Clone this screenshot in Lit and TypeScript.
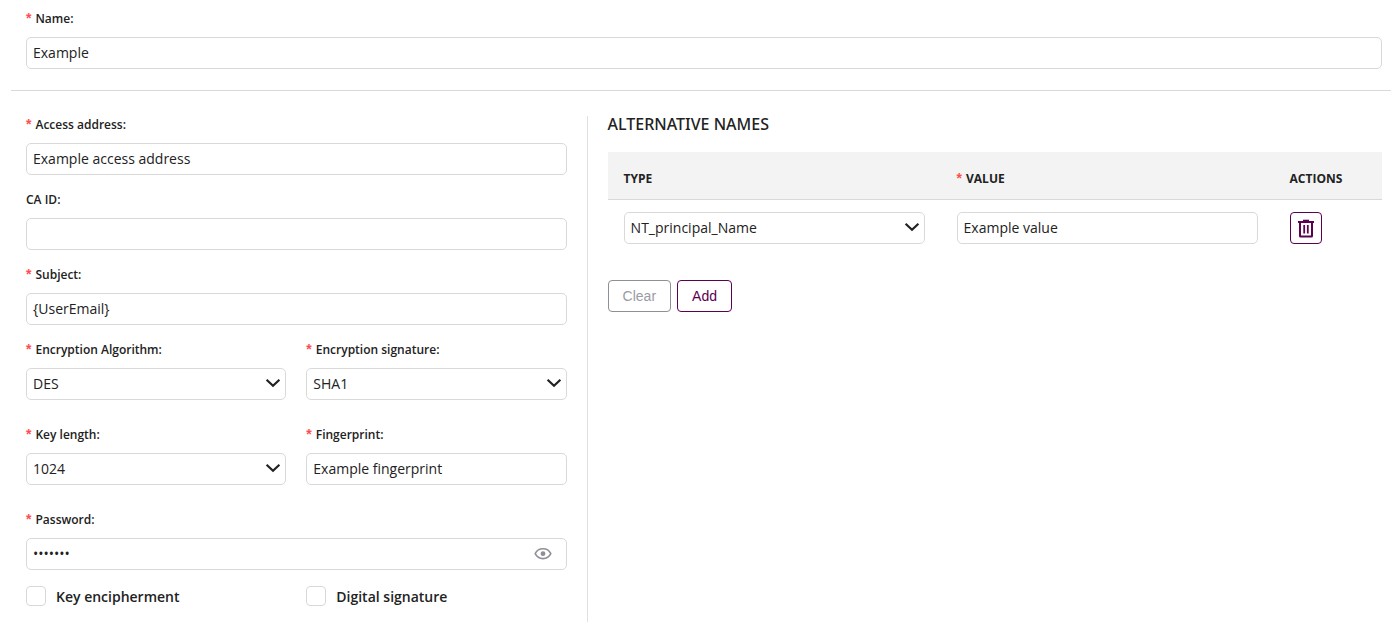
import { LitElement, html, css, svg, nothing } from "lit";
import { customElement, property, state } from "lit/decorators.js";

const controls = css`
  *,
  *::before,
  *::after {
    box-sizing: border-box;
  }
  .control {
    display: block;
    width: 100%;
    height: 32px;
    margin: 0;
    padding: 0 6px;
    border: 1px solid #d9d9d9;
    border-radius: 5px;
    background: #fff;
    color: #222;
    font: 400 14px/22px "Open Sans", "Noto Sans", sans-serif;
    appearance: none;
    outline: none;
  }
  input.control {
    padding-bottom: 2px;
  }
  .control:focus-visible {
    border-color: #5c0050;
  }
  .select-wrap,
  .password-wrap {
    display: grid;
    align-items: center;
  }
  .select-wrap > *,
  .password-wrap > * {
    grid-area: 1 / 1;
  }
  .chevron {
    justify-self: end;
    margin-right: 5px;
    pointer-events: none;
  }
  .required {
    margin-right: 4px;
    color: #ff4d4f;
    font: 700 14px/1 "Liberation Sans", Arial, sans-serif;
  }
`;

const chevron = svg`<svg class="chevron" width="16" height="16" viewBox="0 0 16 16" aria-hidden="true">
  <path d="M1.6 3.7 8 9.8 14.4 3.7" fill="none" stroke="#222" stroke-width="2.2" />
</svg>`;

@customElement("form-field")
class FormField extends LitElement {
  @property() label = "";
  @property() value = "";
  @property() kind: "text" | "select" | "password" = "text";
  @property({ type: Boolean }) required = false;
  @state() private revealed = false;

  static styles = [
    controls,
    css`
      :host {
        display: block;
        min-width: 0;
      }
      .label {
        display: block;
        height: 22px;
        margin-bottom: 7px;
        color: #222;
        font-size: 12px;
        font-weight: 600;
        line-height: 22px;
      }
      .reveal {
        display: flex;
        justify-self: end;
        margin-right: 15px;
        padding: 0;
        border: 0;
        background: none;
        cursor: pointer;
      }
    `,
  ];

  private renderControl() {
    if (this.kind === "select") {
      return html`<div class="select-wrap">
        <select id="control" class="control"><option>${this.value}</option></select>
        ${chevron}
      </div>`;
    }
    if (this.kind === "password") {
      return html`<div class="password-wrap">
        <input id="control" class="control" type=${this.revealed ? "text" : "password"} .value=${this.value} />
        <button class="reveal" type="button" aria-label="Show password" @click=${() => (this.revealed = !this.revealed)}>
          <svg width="18" height="18" viewBox="0 0 18 18" aria-hidden="true">
            <path d="M1.2 8.7C2.8 5.4 5.5 3.8 9 3.8s6.2 1.6 7.8 4.9c-1.6 3.3-4.3 4.9-7.8 4.9S2.8 12 1.2 8.7Z" fill="none" stroke="#8f8f97" stroke-width="1.6" />
            <circle cx="9" cy="8.7" r="2.4" fill="#8f8f97" />
          </svg>
        </button>
      </div>`;
    }
    return html`<input id="control" class="control" type="text" .value=${this.value} />`;
  }

  render() {
    return html`
      <label class="label" for="control">${this.required ? html`<span class="required">*</span>` : nothing}${this.label}:</label>
      ${this.renderControl()}
    `;
  }
}

@customElement("alternative-names")
class AlternativeNames extends LitElement {
  static styles = [
    controls,
    css`
      :host {
        display: block;
        min-width: 0;
      }
      .title {
        margin: 0 0 19px;
        font-family: "Noto Sans", "Open Sans", sans-serif;
        font-size: 16px;
        font-weight: 500;
        line-height: 17px;
        text-transform: uppercase;
      }
      .table {
        width: 100%;
        border-collapse: separate;
        border-spacing: 0;
        table-layout: fixed;
      }
      .wide {
        width: 43%;
      }
      .head {
        height: 48px;
        padding: 7px 16px 0;
        border-bottom: 1px solid #d9d9d9;
        background: #f3f3f3;
        font-size: 12px;
        font-weight: 700;
        line-height: 22px;
        text-align: left;
        text-transform: uppercase;
      }
      .cell {
        padding: 12px 16px;
      }
      .buttons {
        display: flex;
        gap: 6px;
        margin-top: 24px;
      }
      .button {
        height: 32px;
        padding: 0 14px;
        border: 1px solid #5c0050;
        border-radius: 4px;
        background: #fff;
        color: #5c0050;
        font: 400 14px/22px "Liberation Sans", Arial, sans-serif;
        cursor: pointer;
      }
      .muted {
        border-color: #8f8f97;
        color: #9b9ba3;
      }
      .icon {
        display: flex;
        align-items: center;
        justify-content: center;
        width: 32px;
        padding: 0;
      }
    `,
  ];

  render() {
    return html`
      <h2 class="title">Alternative names</h2>
      <table class="table">
        <thead>
          <tr>
            <th class="head wide" id="type">Type</th>
            <th class="head wide" id="value"><span class="required">*</span>Value</th>
            <th class="head">Actions</th>
          </tr>
        </thead>
        <tbody>
          <tr>
            <td class="cell">
              <div class="select-wrap">
                <select class="control" aria-labelledby="type"><option>NT_principal_Name</option></select>
                ${chevron}
              </div>
            </td>
            <td class="cell"><input class="control" type="text" aria-labelledby="value" .value=${"Example value"} /></td>
            <td class="cell">
              <button class="button icon" type="button" aria-label="Delete">
                <svg width="18" height="20" viewBox="0 0 18 20" fill="none" stroke="#5c0050" aria-hidden="true">
                  <path d="M1 4h16" stroke-width="2" />
                  <path d="M6 2.4h6" stroke-width="1.4" />
                  <path d="M3 4v14q0 .5.5.5h11q.5 0 .5-.5V4" stroke-width="2" />
                  <path d="M7.2 7v8.500M10.8 7v8.500" stroke-width="1.8" />
                </svg>
              </button>
            </td>
          </tr>
        </tbody>
      </table>
      <div class="buttons">
        <button class="button muted" type="button">Clear</button>
        <button class="button" type="button">Add</button>
      </div>
    `;
  }
}

@customElement("app-root")
class AppRoot extends LitElement {
  static styles = css`
    :host {
      display: block;
      color: #222;
      font-family: "Open Sans", "Noto Sans", sans-serif;
    }
    *,
    *::before,
    *::after {
      box-sizing: border-box;
    }
    .form {
      padding: 8px 0 15px 11px;
    }
    .top {
      padding: 0 9px 21px 15px;
      border-bottom: 1px solid #d9d9d9;
    }
    .columns {
      display: grid;
      grid-template-columns: 37fr 1px 53fr;
      gap: 20px;
      padding: 23px 9px 0 15px;
    }
    .divider {
      margin-top: 2px;
      background: #e0e0e0;
    }
    .fields {
      display: grid;
      grid-template-columns: 1fr 1fr;
      column-gap: 20px;
      row-gap: 14px;
      align-content: start;
      padding-bottom: 14px;
    }
    .full {
      grid-column: 1 / -1;
    }
    .spaced {
      margin-bottom: 10px;
    }
    .check {
      display: flex;
      align-items: flex-start;
      gap: 10px;
      margin-top: 2px;
      font-size: 14px;
      font-weight: 600;
      line-height: 22px;
    }
    .box {
      width: 20px;
      height: 20px;
      margin: 0;
      border: 1px solid #d9d9d9;
      border-radius: 4px;
      background: #fff;
      appearance: none;
    }
    .box:checked {
      border-color: #5c0050;
      background: #5c0050;
    }
    .names {
      margin-top: 2px;
    }
  `;

  render() {
    return html`
      <form class="form">
        <div class="top">
          <form-field label="Name" value="Example" required></form-field>
        </div>
        <div class="columns">
          <div class="fields">
            <form-field class="full" label="Access address" value="Example access address" required></form-field>
            <form-field class="full" label="CA ID"></form-field>
            <form-field class="full" label="Subject" value="{UserEmail}" required></form-field>
            <form-field class="spaced" kind="select" label="Encryption Algorithm" value="DES" required></form-field>
            <form-field class="spaced" kind="select" label="Encryption signature" value="SHA1" required></form-field>
            <form-field class="spaced" kind="select" label="Key length" value="1024" required></form-field>
            <form-field class="spaced" label="Fingerprint" value="Example fingerprint" required></form-field>
            <form-field class="full" kind="password" label="Password" value="example" required></form-field>
            <label class="check"><input class="box" type="checkbox" />Key encipherment</label>
            <label class="check"><input class="box" type="checkbox" />Digital signature</label>
          </div>
          <div class="divider"></div>
          <alternative-names class="names"></alternative-names>
        </div>
      </form>
    `;
  }
}
